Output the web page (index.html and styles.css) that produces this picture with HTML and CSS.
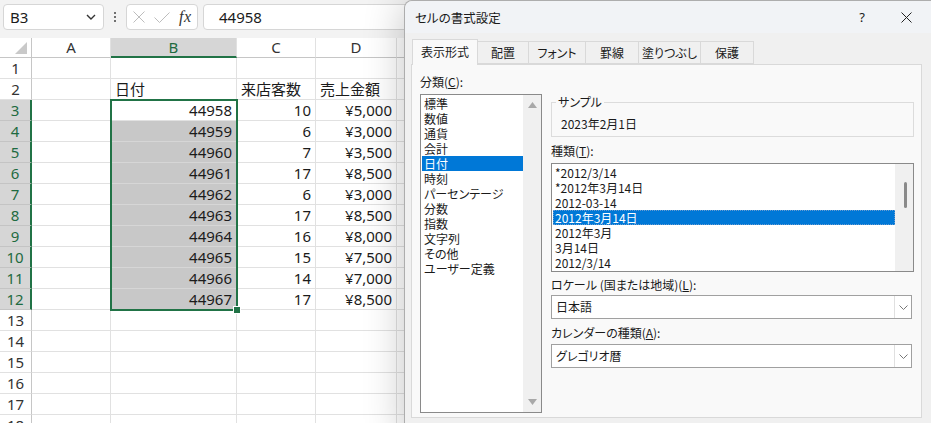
FILE: index.html
```html
<!DOCTYPE html>
<html lang="ja">
<head>
<meta charset="utf-8">
<title>セルの書式設定</title>
<link rel="stylesheet" href="styles.css">
</head>
<body>
<div class="fbar">
  <div class="namebox"><span>B3</span><svg class="nb-chev" width="10" height="6" viewBox="0 0 10 6"><path d="M1 1L5 5L9 1" fill="none" stroke="#333" stroke-width="1.4"/></svg></div>
  <div class="dots"><i></i><i></i><i></i></div>
  <div class="fxbox">
    <svg width="12" height="12" viewBox="0 0 12 12"><path d="M0.5 0.5L11.5 11.5M11.5 0.5L0.5 11.5" stroke="#bdbdbd" stroke-width="1" fill="none"/></svg>
    <svg width="16" height="11" viewBox="0 0 16 11"><path d="M0.5 5.5L5.5 10.5L15.5 0.5" stroke="#bdbdbd" stroke-width="1" fill="none"/></svg>
    <span class="fx">fx</span>
  </div>
  <div class="finput">44958</div>
</div>

<div class="sheet">
  <div class="row hdr">
    <div class="rh corner"><svg width="12" height="12" viewBox="0 0 12 12"><polygon points="12,0 12,12 0,12" fill="#c9c9c9"/></svg></div>
    <div class="c ca">A</div><div class="c cb on">B</div><div class="c cc">C</div><div class="c cd">D</div><div class="c ce">E</div>
  </div>
  <div class="row"><div class="rh">1</div><div class="c ca"></div><div class="c cb"></div><div class="c cc"></div><div class="c cd"></div><div class="c ce"></div></div>
  <div class="row"><div class="rh">2</div><div class="c ca"></div><div class="c cb">日付</div><div class="c cc">来店客数</div><div class="c cd">売上金額</div><div class="c ce"></div></div>
  <div class="row"><div class="rh on">3</div><div class="c ca"></div><div class="c cb n">44958</div><div class="c cc n">10</div><div class="c cd n">¥5,000</div><div class="c ce"></div></div>
  <div class="row"><div class="rh on">4</div><div class="c ca"></div><div class="c cb n hl">44959</div><div class="c cc n">6</div><div class="c cd n">¥3,000</div><div class="c ce"></div></div>
  <div class="row"><div class="rh on">5</div><div class="c ca"></div><div class="c cb n hl">44960</div><div class="c cc n">7</div><div class="c cd n">¥3,500</div><div class="c ce"></div></div>
  <div class="row"><div class="rh on">6</div><div class="c ca"></div><div class="c cb n hl">44961</div><div class="c cc n">17</div><div class="c cd n">¥8,500</div><div class="c ce"></div></div>
  <div class="row"><div class="rh on">7</div><div class="c ca"></div><div class="c cb n hl">44962</div><div class="c cc n">6</div><div class="c cd n">¥3,000</div><div class="c ce"></div></div>
  <div class="row"><div class="rh on">8</div><div class="c ca"></div><div class="c cb n hl">44963</div><div class="c cc n">17</div><div class="c cd n">¥8,500</div><div class="c ce"></div></div>
  <div class="row"><div class="rh on">9</div><div class="c ca"></div><div class="c cb n hl">44964</div><div class="c cc n">16</div><div class="c cd n">¥8,000</div><div class="c ce"></div></div>
  <div class="row"><div class="rh on">10</div><div class="c ca"></div><div class="c cb n hl">44965</div><div class="c cc n">15</div><div class="c cd n">¥7,500</div><div class="c ce"></div></div>
  <div class="row"><div class="rh on">11</div><div class="c ca"></div><div class="c cb n hl">44966</div><div class="c cc n">14</div><div class="c cd n">¥7,000</div><div class="c ce"></div></div>
  <div class="row"><div class="rh on">12</div><div class="c ca"></div><div class="c cb n hl">44967</div><div class="c cc n">17</div><div class="c cd n">¥8,500</div><div class="c ce"></div></div>
  <div class="row"><div class="rh">13</div><div class="c ca"></div><div class="c cb"></div><div class="c cc"></div><div class="c cd"></div><div class="c ce"></div></div>
  <div class="row"><div class="rh">14</div><div class="c ca"></div><div class="c cb"></div><div class="c cc"></div><div class="c cd"></div><div class="c ce"></div></div>
  <div class="row"><div class="rh">15</div><div class="c ca"></div><div class="c cb"></div><div class="c cc"></div><div class="c cd"></div><div class="c ce"></div></div>
  <div class="row"><div class="rh">16</div><div class="c ca"></div><div class="c cb"></div><div class="c cc"></div><div class="c cd"></div><div class="c ce"></div></div>
  <div class="row"><div class="rh">17</div><div class="c ca"></div><div class="c cb"></div><div class="c cc"></div><div class="c cd"></div><div class="c ce"></div></div>
  <div class="row"><div class="rh">18</div><div class="c ca"></div><div class="c cb"></div><div class="c cc"></div><div class="c cd"></div><div class="c ce"></div></div>
  <div class="sel"><div class="handle"></div></div>
</div>

<div class="dialog">
  <div class="dtitle">
    <span class="dname">セルの書式設定</span>
    <span class="dbtn help">?</span>
    <span class="dbtn close"><svg width="11" height="11" viewBox="0 0 11 11"><path d="M0.5 0.5L10.5 10.5M10.5 0.5L0.5 10.5" stroke="#222" stroke-width="1" fill="none"/></svg></span>
  </div>
  <div class="tabs">
    <div class="tab active t1">表示形式</div>
    <div class="tab t2">配置</div>
    <div class="tab t3">フォント</div>
    <div class="tab t4">罫線</div>
    <div class="tab t5">塗りつぶし</div>
    <div class="tab t6">保護</div>
  </div>
  <div class="panel">
    <div class="lcol">
      <div class="lbl">分類(<u>C</u>):</div>
      <div class="catlist">
        <div class="items">
          <div class="it">標準</div>
          <div class="it">数値</div>
          <div class="it">通貨</div>
          <div class="it">会計</div>
          <div class="it selit">日付</div>
          <div class="it">時刻</div>
          <div class="it">パーセンテージ</div>
          <div class="it">分数</div>
          <div class="it">指数</div>
          <div class="it">文字列</div>
          <div class="it">その他</div>
          <div class="it">ユーザー定義</div>
        </div>
        <div class="vscroll">
          <svg width="9" height="6" viewBox="0 0 9 6"><polygon points="4.5,0 9,6 0,6" fill="#a8a8a8"/></svg>
          <svg width="9" height="6" viewBox="0 0 9 6"><polygon points="0,0 9,0 4.5,6" fill="#a8a8a8"/></svg>
        </div>
      </div>
    </div>
    <div class="rcol">
      <div class="group">
        <div class="legend">サンプル</div>
        <div class="sample">2023年2月1日</div>
      </div>
      <div class="lbl l2">種類(<u>T</u>):</div>
      <div class="typelist">
        <div class="items">
          <div class="it">*2012/3/14</div>
          <div class="it">*2012年3月14日</div>
          <div class="it">2012-03-14</div>
          <div class="it selit focus">2012年3月14日</div>
          <div class="it">2012年3月</div>
          <div class="it">3月14日</div>
          <div class="it">2012/3/14</div>
        </div>
        <div class="vscroll2"><div class="thumb"></div></div>
      </div>
      <div class="lbl l3">ロケール (国または地域)(<u>L</u>):</div>
      <div class="combo"><span class="cval">日本語</span><span class="cbtn"><svg width="9" height="5" viewBox="0 0 9 5"><path d="M0.5 0.5L4.5 4.5L8.5 0.5" stroke="#777" stroke-width="1" fill="none"/></svg></span></div>
      <div class="lbl l4">カレンダーの種類(<u>A</u>):</div>
      <div class="combo c2"><span class="cval">グレゴリオ暦</span><span class="cbtn"><svg width="9" height="5" viewBox="0 0 9 5"><path d="M0.5 0.5L4.5 4.5L8.5 0.5" stroke="#777" stroke-width="1" fill="none"/></svg></span></div>
    </div>
  </div>
</div>
</body>
</html>
```
FILE: styles.css
```css
* { box-sizing: border-box; }
html, body { margin: 0; padding: 0; }
body {
  width: 931px;
  height: 423px;
  overflow: hidden;
  position: relative;
  background: #fff;
  font-family: "Noto Sans", "Noto Sans CJK JP", sans-serif;
  color: #1b1b1b;
}

/* formula bar */
.fbar {
  height: 38px;
  background: #f3f3f3;
  display: flex;
  align-items: flex-start;
  padding-top: 4px;
}
.namebox {
  margin-left: 3px;
  width: 101px;
  height: 26px;
  background: #fff;
  border: 1px solid #d6d6d6;
  border-radius: 4px;
  display: flex;
  align-items: center;
  justify-content: space-between;
  padding: 0 7px 0 6px;
  font-size: 15px;
  line-height: 24px;
}
.dots {
  width: 22px;
  height: 26px;
  display: flex;
  flex-direction: column;
  align-items: center;
  justify-content: center;
  gap: 2px;
}
.dots i { display: block; width: 2px; height: 2px; background: #444; border-radius: 1px; }
.fxbox {
  width: 72px;
  height: 26px;
  background: #fff;
  border: 1px solid #d6d6d6;
  border-radius: 4px;
  display: flex;
  align-items: center;
  gap: 9px;
  padding-left: 6px;
}
.fx {
  font-family: "Liberation Serif", serif;
  font-style: italic;
  font-size: 16px;
  color: #333;
  letter-spacing: 0.5px;
}
.finput {
  margin-left: 5px;
  flex: 1;
  height: 26px;
  background: #fff;
  border: 1px solid #d6d6d6;
  border-radius: 4px;
  padding-left: 15px;
  font-size: 15px;
  line-height: 24px;
}

/* sheet */
.sheet { position: relative; }
.row { display: flex; height: 21px; }
.row.hdr { height: 20px; }
.rh, .c {
  height: 100%;
  border-right: 1px solid #e1e1e1;
  border-bottom: 1px solid #e1e1e1;
  font-size: 15px;
  line-height: 20px;
  white-space: nowrap;
  overflow: hidden;
}
.row.hdr .c, .row.hdr .rh { line-height: 19px; }
.rh {
  width: 32px;
  flex: none;
  text-align: center;
  color: #333;
  background: #fff;
  border-right-color: #c6c6c6;
  border-bottom-color: #e1e1e1;
}
.rh.on {
  background: #d6d6d6;
  color: #1e6b41;
  border-right: 2px solid #217346;
  border-bottom-color: #c4c4c4;
}
.corner { display: flex; align-items: flex-end; justify-content: flex-end; padding: 0 4px 3px 0; }
.row.hdr .c, .row.hdr .rh { border-bottom-color: #c6c6c6; }
.row.hdr .c { text-align: center; color: #333; }
.row.hdr .c.on {
  background: #d6d6d6;
  color: #1e6b41;
  border-bottom: 2px solid #217346;
}
.c { padding: 0 4px; flex: none; }
.ca { width: 79px; }
.cb { width: 126px; }
.cc { width: 79px; }
.cd { width: 81px; }
.ce { width: 160px; }
.n { text-align: right; }
.hl { background: #c8c8c8; border-bottom-color: #d6d6d6; }

.sel {
  position: absolute;
  left: 110px;
  top: 61px;
  width: 128px;
  height: 212px;
  border: 2px solid #217346;
}
.handle {
  position: absolute;
  right: -5px;
  bottom: -5px;
  width: 8px;
  height: 8px;
  background: #217346;
  border: 1px solid #fff;
}

/* dialog */
.dialog {
  position: absolute;
  left: 404px;
  top: 0;
  width: 536px;
  height: 440px;
  background: #f0f0f0;
  border: 1px solid rgba(0,0,0,0.28);
  border-radius: 8px 8px 0 0;
  box-shadow: 0 2px 40px rgba(0,0,0,0.24);
  font-family: "Noto Sans CJK JP", sans-serif;
  font-feature-settings: "palt";
  font-size: 12px;
  color: #1a1a1a;
}
.dtitle {
  height: 32px;
  display: flex;
  align-items: center;
  padding-left: 10px;
  background: #f1f3f6;
  border-radius: 8px 8px 0 0;
}
.dname { flex: 1; font-size: 12.5px; }
.dbtn {
  width: 44px;
  height: 32px;
  display: flex;
  align-items: center;
  justify-content: center;
  font-size: 13px;
  font-family: "Noto Sans", sans-serif;
}
.dbtn.close { margin-right: 11px; }

.tabs {
  display: flex;
  align-items: flex-end;
  height: 31px;
  padding-left: 7px;
  position: relative;
  z-index: 1;
}
.tab {
  height: 23px;
  line-height: 21px;
  text-align: center;
  background: #f0f0f0;
  border: 1px solid #d9d9d9;
  border-left: none;
  white-space: nowrap;
}
.tab.active {
  height: 26px;
  line-height: 22px;
  background: #f9f9f9;
  border-left: 1px solid #d9d9d9;
  border-bottom: none;
  margin-bottom: -1px;
  padding-top: 1px;
}
.t1 { width: 66px; }
.t2 { width: 51px; }
.t3 { width: 57px; }
.t4 { width: 53px; }
.t5 { width: 62px; }
.t6 { width: 53px; }

.panel {
  margin-left: 6px;
  width: 511px;
  height: 354px;
  background: #f9f9f9;
  border: 1px solid #d9d9d9;
  display: flex;
  align-items: flex-start;
}
.lcol { margin-left: 8px; width: 122px; padding-top: 9px; }
.lbl { line-height: 16px; height: 16px; white-space: nowrap; }
.lcol .lbl { margin-bottom: 4px; }
.catlist {
  width: 122px;
  height: 319px;
  background: #fff;
  border: 1px solid #8a8a8a;
  display: flex;
}
.items { flex: 1; padding-top: 1px; }
.catlist .items { padding-left: 1px; }
.it { line-height: 15px; height: 15px; padding-left: 2px; white-space: nowrap; }
.selit { background: #0078d7; color: #fff; }
.focus { outline: 1px dotted #6a9cd0; outline-offset: -1px; }
.vscroll {
  width: 18px;
  background: #f0f0f0;
  display: flex;
  flex-direction: column;
  justify-content: space-between;
  align-items: center;
  padding: 7px 0 7px;
}

.rcol { margin-left: 9px; width: 363px; padding-top: 37px; }
.group {
  border: 1px solid #dcdcdc;
  padding: 0 9px 4px;
}
.legend {
  width: fit-content;
  margin: -8px 0 0 -5px;
  padding: 0 2px;
  background: #f9f9f9;
  line-height: 14px;
}
.sample { margin-top: 7px; line-height: 16px; }
.l2 { margin-top: 6px; }
.typelist {
  margin-top: 4px;
  height: 109px;
  background: #fff;
  border: 1px solid #8a8a8a;
  display: flex;
}
.typelist .items { padding-left: 1px; }
.vscroll2 { width: 18px; background: #f0f0f0; position: relative; }
.thumb {
  margin: 18px 0 0 9px;
  width: 3px;
  height: 26px;
  background: #8a8a8a;
  border-radius: 2px;
}
.l3 { margin-top: 5px; }
.combo {
  margin-top: 2px;
  width: 361px;
  height: 24px;
  background: #fff;
  border: 1px solid #a0a0a0;
  display: flex;
  align-items: stretch;
}
.cval { flex: 1; padding-left: 4px; line-height: 22px; }
.cbtn {
  width: 17px;
  border-left: 1px solid #e0e0e0;
  display: flex;
  align-items: center;
  justify-content: center;
}
.l4 { margin-top: 6px; }
.combo.c2 { margin-top: 3px; }
```
